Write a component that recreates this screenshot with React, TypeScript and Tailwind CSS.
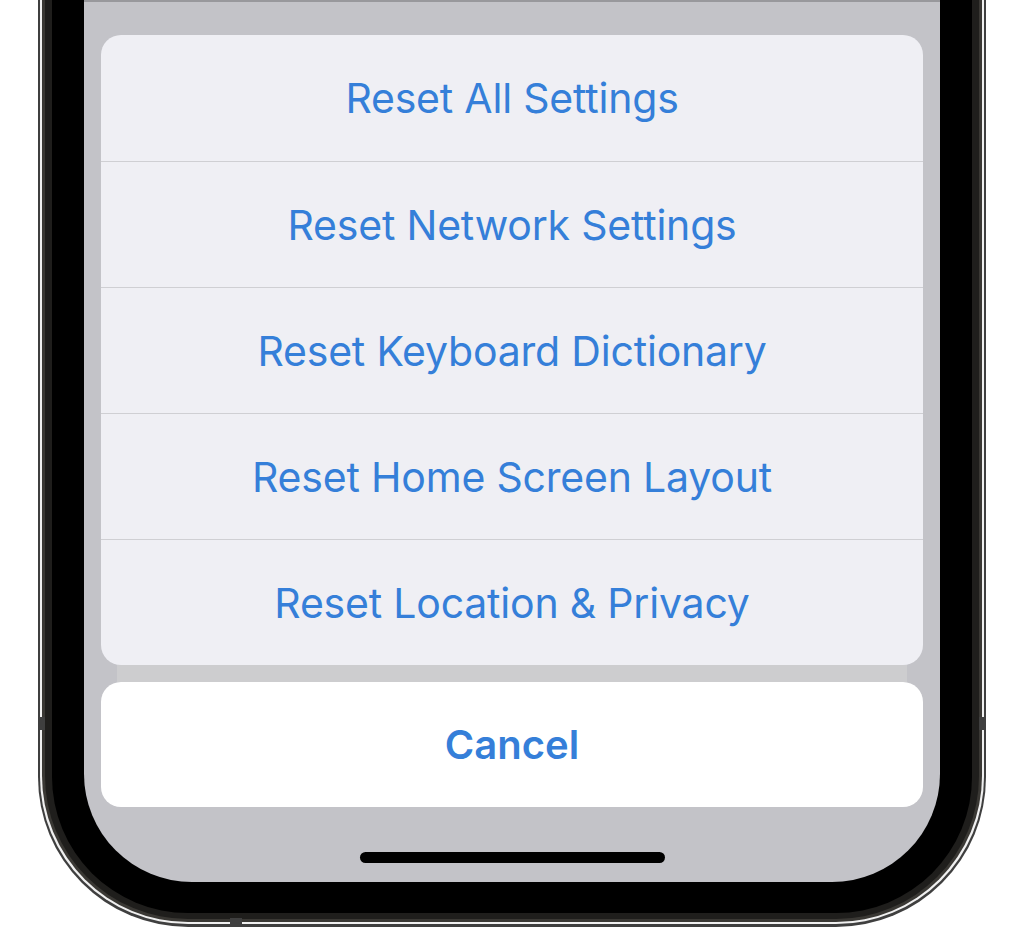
const actions = [
  "Reset All Settings",
  "Reset Network Settings",
  "Reset Keyboard Dictionary",
  "Reset Home Screen Layout",
  "Reset Location & Privacy",
];

function ActionSheet() {
  return (
    <div className="flex flex-col">
      <div className="overflow-hidden rounded-[20px] bg-[#efeff4]">
        {actions.map((label, i) => (
          <button
            key={label}
            className={`flex h-[126px] w-full items-center justify-center pt-[2px] text-[41px] tracking-[-0.2px] text-[#357fd9] ${
              i > 0 ? "border-t border-[#cfcfd3]" : ""
            }`}
          >
            {label}
          </button>
        ))}
      </div>
      <div className="mx-[16px] h-[17px] bg-[#cdcdcf]" />
      <button className="flex h-[125px] w-full items-center justify-center rounded-[20px] bg-white text-[40px] font-semibold text-[#357fd9]">
        Cancel
      </button>
    </div>
  );
}

export default function App() {
  return (
    <div
      className="relative h-[943px] w-full overflow-hidden bg-white"
      style={{ fontFamily: "Inter, 'Noto Sans', sans-serif" }}
    >
      {/* phone body: outer rim, highlight line, inner band, bezel, screen */}
      <div className="relative ml-[38px] h-[927px] w-[948px] rounded-b-[150px] border-x-2 border-b-[3px] border-[#3f3f3f] bg-[#f0f0f0] px-[2px] pb-[2px]">
        <div className="h-full rounded-b-[146px] bg-[#3a3834] px-[3px] pb-[3px]">
          <div className="h-full rounded-b-[143px] bg-[#1f1e1c] px-[7px] pb-[6px]">
            <div className="h-full rounded-b-[136px] bg-black px-[32px] pb-[31px]">
              <div className="flex h-full flex-col rounded-b-[108px] border-t-2 border-[#98989c] bg-[#c3c3c8] px-[17px] pt-[33px]">
                <ActionSheet />
                <div className="mx-auto mt-[45px] h-[11px] w-[305px] rounded-full bg-black" />
              </div>
            </div>
          </div>
        </div>

        {/* antenna breaks in the rim */}
        <div className="absolute left-[-2px] top-[717px] h-[13px] w-[7px] bg-[#3f3f3f]" />
        <div className="absolute right-[-2px] top-[717px] h-[13px] w-[7px] bg-[#3f3f3f]" />
        <div className="absolute bottom-[-3px] left-[190px] h-[9px] w-[12px] bg-[#3f3f3f]" />
      </div>
    </div>
  );
}
